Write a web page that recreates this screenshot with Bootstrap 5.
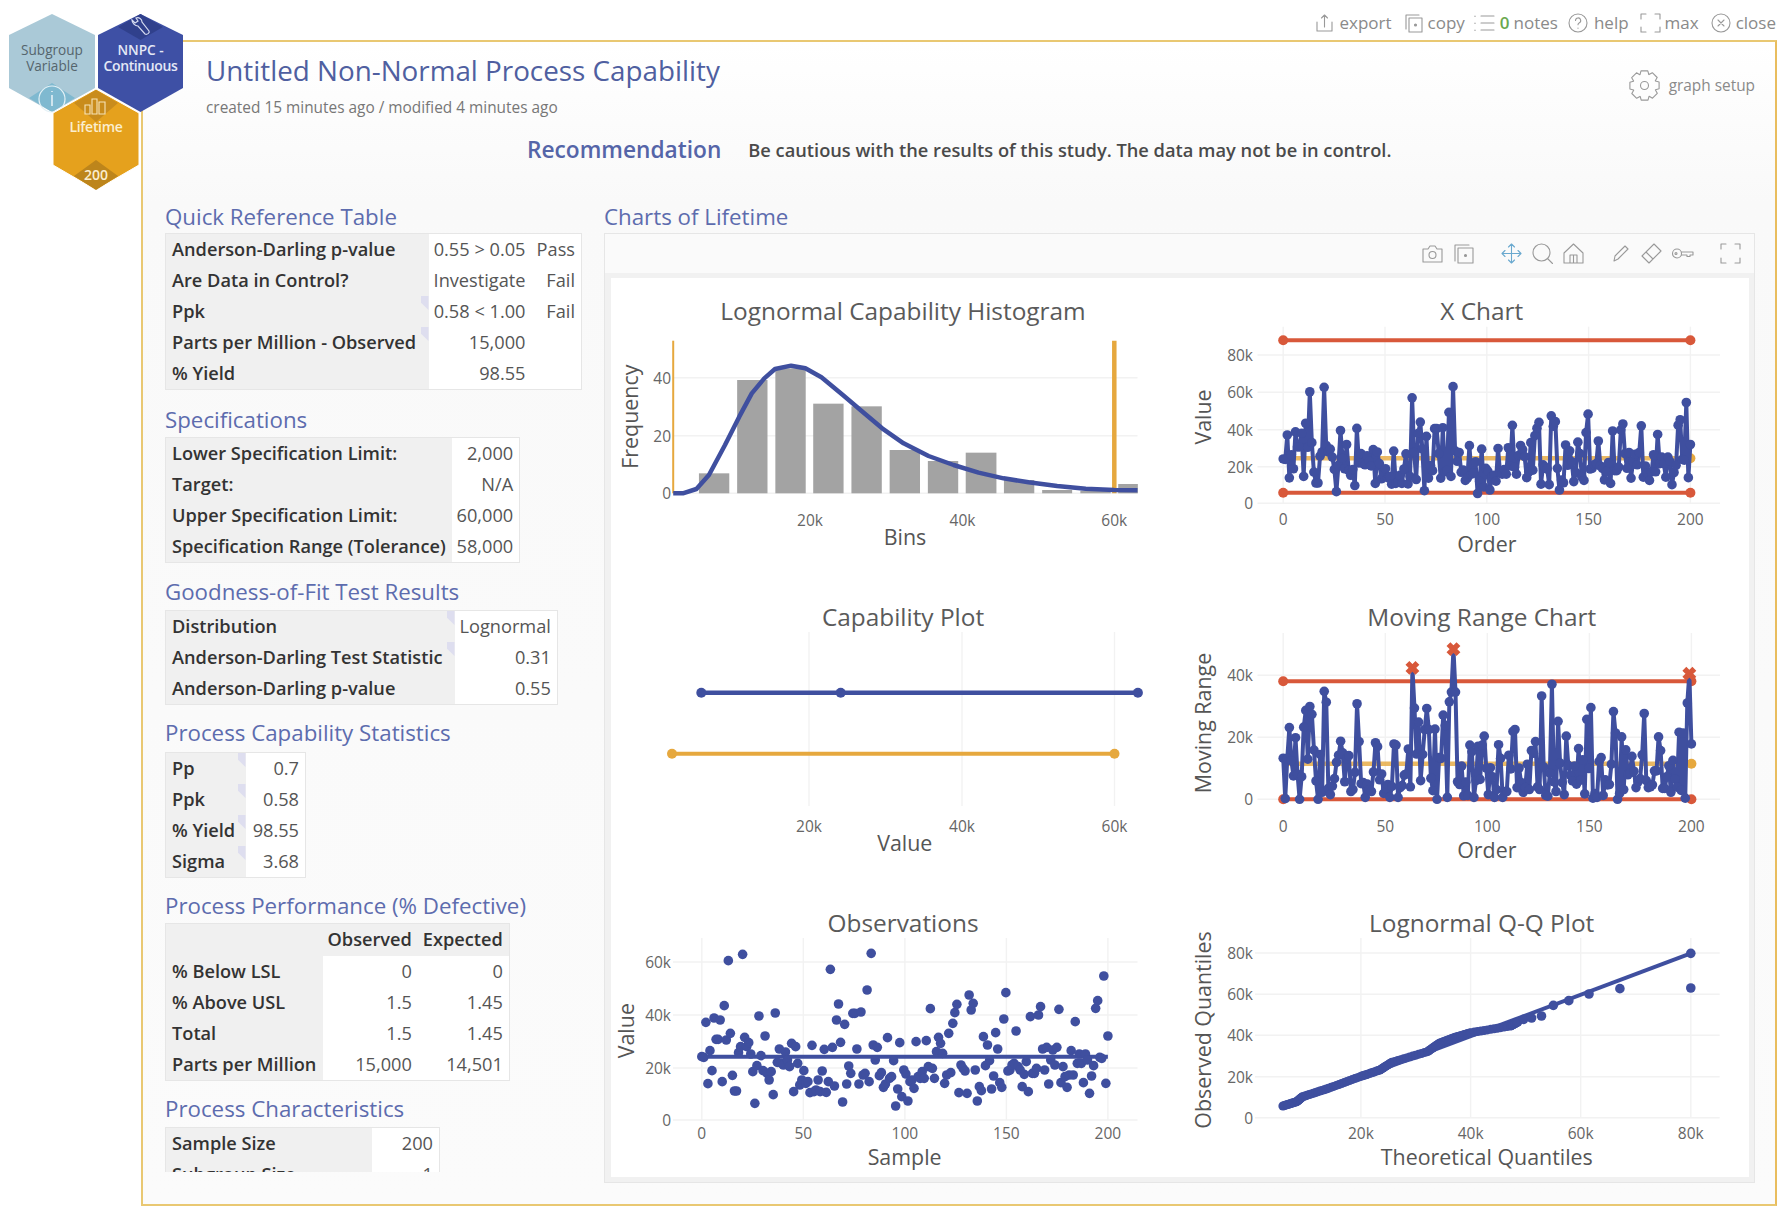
<!DOCTYPE html>
<html lang="en">
<head>
<meta charset="utf-8">
<title>Untitled Non-Normal Process Capability</title>
<link rel="stylesheet" href="https://cdn.jsdelivr.net/npm/bootstrap@5.3.0/dist/css/bootstrap.min.css">
<style>
html,body{height:100%;}
body{font-family:"Open Sans",sans-serif;background:#fff;color:#444;overflow:hidden;position:relative;}
.top-tools{height:40px;padding:5px 15px 0 0;color:#8a8a8a;font-size:17px;line-height:1;}
.top-tools svg,.plot-tools svg,.setup-link svg{fill:none;stroke:#999;stroke-width:1.1;stroke-linecap:round;stroke-linejoin:round;flex:none;}
.tool-item{display:flex;align-items:center;}
.tool-item svg{margin-right:5px;}
.ti-export svg{margin-right:6px;}
.ti-copy{margin-left:12px;}
.ti-notes{margin-left:9px;}
.ti-help{margin-left:10px;}
.ti-help svg{margin-right:6px;}
.ti-max{margin-left:11px;}
.ti-close{margin-left:12px;}
.ti-max svg{margin-right:4px;}
.zero-count{color:#6aa84f;font-weight:600;margin-right:4px;}
.main-frame{margin:0 14px 0 141px;height:1166px;border:2px solid #e9c872;border-right-color:#e9bd5e;background:linear-gradient(#fff 0,#f9f9f9 160px,#fbfbfb 100%);}
.head-row{padding:9px 20px 0 63px;}
.study-title{font-size:27.8px;line-height:38px;font-weight:400;color:#4f5fa0;margin:0;}
.study-sub{font-size:15.400px;line-height:20px;color:#777;margin-top:9px;}
.setup-link{font-size:15.400px;color:#8a8a8a;margin-top:19px;gap:9px;}
.reco-row{padding-left:384px;margin-top:17px;height:30px;line-height:30px;gap:27px;}
.reco-label{font-size:22.7px;font-weight:600;color:#5565a8;}
.reco-text{font-size:18.250px;font-weight:600;color:#4a4a4a;}
.work-row{margin-top:37px;padding-left:22px;}
.left-pane{width:439px;height:970px;overflow:hidden;flex:none;}
.right-pane{width:1151px;flex:none;}
.sec-head{font-size:22.3px;line-height:30px;height:31px;color:#5d6cae;font-weight:400;margin:15px 0 0;white-space:nowrap;}
.sec-head.first-head{margin-top:0;}
.hd-spec{height:32px;}
.sec-head.hd-gof{margin-top:14px;height:33px;}
.sec-head.hd-cap{margin-top:13px;height:34px;}
.sec-head.hd-perf{margin-top:13px;height:32px;}
.sec-head.hd-char{margin-top:13.500px;height:33px;}
.stat-table{width:auto;border:1px solid #e6e6e6;font-size:18.200px;line-height:23px;background:#fff;margin:0;--bs-table-bg:transparent;}
.stat-table td,.stat-table th{padding:4px 6px 4px 5px;height:31px;border:0;white-space:nowrap;color:#444;box-shadow:none;}
.stat-table .lab{font-weight:600;background:#f0f0f0;color:#333;position:relative;text-align:left;padding:4px 4px 4px 6px;}
.stat-table .val{text-align:right;font-weight:400;color:#555;}
.stat-table tr.head-line td{background:#f0f0f0;text-align:right;font-weight:600;color:#333;height:32px;}
.lab.tick::after{content:"";position:absolute;top:0;right:0;width:8px;height:14px;background:#dedeef;clip-path:polygon(0 0,100% 0,100% 100%,0 45%);}
.w-qrt .lab{min-width:263px;}.w-qrt td:nth-child(2){min-width:103px;}.w-qrt td:nth-child(3){min-width:50px;}
.w-spec .lab{min-width:286px;}.w-spec .val{min-width:67px;}
.w-gof .lab{min-width:289px;}.w-gof .val{min-width:102px;}
.w-cap .lab{min-width:80px;}.w-cap .val{min-width:60px;}
.w-perf .lab{min-width:157px;}.w-perf td:nth-child(2){min-width:94px;}.w-perf td:nth-child(3){min-width:90px;}
.w-char .lab{min-width:206px;}.w-char .val{min-width:68px;}
.plot-shell{height:950px;border:1px solid #e6e6e6;background:#f1f1f1;padding:0 5px 5px 6px;display:flex;flex-direction:column;}
.plot-tools{height:39px;flex:none;margin:0 -5px 5px -6px;padding-right:13px;background:#fafafa;color:#999;}
.pt-copy{margin-left:11px;}.pt-move{margin-left:27px;}.pt-zoom,.pt-home{margin-left:10px;}.pt-pen{margin-left:29px;}.pt-erase{margin-left:12px;}.pt-key{margin-left:9px;}.pt-full{margin-left:26px;}
.pt-move path{stroke:#6aa9cf;}
.plot-canvas{flex:1;overflow:hidden;background:#fff;display:grid;grid-template-columns:569px 569px;grid-auto-rows:306px;}
.plot-canvas svg{display:block;width:569px;height:306px;font-family:"Open Sans",sans-serif;}
.c-title{font-size:24.4px;fill:#5a5a5a;text-anchor:middle;dominant-baseline:central;}
.c-axis{font-size:21.4px;fill:#555;text-anchor:middle;dominant-baseline:central;}
.c-tick{font-size:15.5px;fill:#666;dominant-baseline:central;}
.hex-badges{position:absolute;left:0;top:0;width:200px;height:200px;font-family:"Open Sans",sans-serif;}
</style>
</head>
<body>
<div class="top-tools d-flex justify-content-end align-items-center">
  <div class="tool-item ti-export"><svg width="17" height="20" viewBox="0 0 17 20"><path d="M1 9v9h15V9M8.500 14V2M5.500 5l3-3 3 3"/></svg>export</div>
  <div class="tool-item ti-copy"><svg width="19" height="20" viewBox="0 0 19 20"><path d="M2 16V2h13M5 5h13v14H5z"/><circle cx="11.500" cy="12" r="1" fill="#999"/></svg>copy</div>
  <div class="tool-item ti-notes"><svg width="21" height="18" viewBox="0 0 21 18"><path d="M1 2v.5M1 9v.5M1 16v.5M7 2h13M7 9h13M7 16h13"/></svg><span class="zero-count">0</span>notes</div>
  <div class="tool-item ti-help"><svg width="20" height="20" viewBox="0 0 20 20"><circle cx="10" cy="10" r="9"/><path d="M7.500 7.500a2.600 2.600 0 1 1 3.600 2.400c-.8.4-1.100.9-1.100 1.900M10 15v.3"/></svg>help</div>
  <div class="tool-item ti-max"><svg width="21" height="20" viewBox="0 0 21 20"><path d="M1 6V1h5M15 1h5v5M20 14v5h-5M6 19H1v-5"/></svg>max</div>
  <div class="tool-item ti-close"><svg width="20" height="20" viewBox="0 0 20 20"><circle cx="10" cy="10" r="9"/><path d="M7 7l6 6M13 7l-6 6"/></svg>close</div>
</div>

<svg class="hex-badges" viewBox="0 0 200 200">
  <polygon points="52,14 95,35 95,88 52,112 9,88 9,35" fill="#aac9d7"/>
  <polygon points="52,83 75,98 52,112 29,98" fill="#7fb9d0"/>
  <circle cx="52" cy="99" r="13" fill="none" stroke="#e4f1f6" stroke-width="1.2"/>
  <path d="M52 91v1M52 95v11" stroke="#e4f1f6" stroke-width="1.6" fill="none"/>
  <text x="52" y="49" font-size="13.600" fill="#55656d" text-anchor="middle" dominant-baseline="central">Subgroup</text>
  <text x="52" y="65.500" font-size="13.600" fill="#55656d" text-anchor="middle" dominant-baseline="central">Variable</text>
  <polygon points="140.5,14 183,35 183,88 140.5,112 98,88 98,35" fill="#3e50a5"/>
  <polygon points="140.5,14 163,27 140.5,40 118,27" fill="#30408c"/>
  <path d="M132 20l3 3 3-2-2-3c3-1 6 1 6 4l7 9c1 2-2 4-4 3l-7-8c-3 0-6-3-6-6z" fill="none" stroke="#d5dbf0" stroke-width="1.2"/>
  <text x="140.5" y="49" font-size="13.600" font-weight="600" fill="#e4e8f6" text-anchor="middle" dominant-baseline="central">NNPC -</text>
  <text x="140.5" y="65.500" font-size="14" font-weight="600" letter-spacing="-.4" fill="#e4e8f6" text-anchor="middle" dominant-baseline="central">Continuous</text>
  <polygon points="96,89 139,113 139,165 96,190 53,165 53,113" fill="#e5a11d" stroke="#fff" stroke-width="1"/>
  <polygon points="96,90 118,103 96,122 74,103" fill="#c98c1c"/>
  <polygon points="96,160 118,176 96,190 74,176" fill="#bd851b"/>
  <path d="M85 114v-9h5v9zM92 114V99h5v15zM99 114v-12h6v12z" fill="none" stroke="#f6e3b8" stroke-width="1.1"/>
  <text x="96" y="126.500" font-size="14" font-weight="600" letter-spacing="-.3" fill="#fbeecf" text-anchor="middle" dominant-baseline="central">Lifetime</text>
  <text x="96" y="174.500" font-size="14" font-weight="600" fill="#fbeecf" text-anchor="middle" dominant-baseline="central">200</text>
</svg>

<main class="main-frame">
  <div class="head-row d-flex justify-content-between">
    <div>
      <h1 class="study-title">Untitled Non-Normal Process Capability</h1>
      <div class="study-sub">created 15 minutes ago / modified 4 minutes ago</div>
    </div>
    <div class="setup-link d-flex align-items-center align-self-start">
      <svg width="31" height="31" viewBox="0 0 31 31"><path id="gearPath"/><circle cx="15.500" cy="15.500" r="4"/></svg>
      <span>graph setup</span>
    </div>
  </div>
  <div class="reco-row d-flex align-items-center">
    <span class="reco-label">Recommendation</span>
    <span class="reco-text">Be cautious with the results of this study. The data may not be in control.</span>
  </div>
  <div class="work-row d-flex">
    <section class="left-pane">
      <h2 class="sec-head first-head">Quick Reference Table</h2>
      <table class="table stat-table w-qrt"><tbody>
        <tr><td class="lab">Anderson-Darling p-value</td><td class="val">0.55 &gt; 0.05</td><td class="val">Pass</td></tr>
        <tr><td class="lab">Are Data in Control?</td><td class="val">Investigate</td><td class="val">Fail</td></tr>
        <tr><td class="lab tick">Ppk</td><td class="val">0.58 &lt; 1.00</td><td class="val">Fail</td></tr>
        <tr><td class="lab tick">Parts per Million - Observed</td><td class="val">15,000</td><td class="val"></td></tr>
        <tr><td class="lab">% Yield</td><td class="val">98.55</td><td class="val"></td></tr>
      </tbody></table>
      <h2 class="sec-head hd-spec">Specifications</h2>
      <table class="table stat-table w-spec"><tbody>
        <tr><td class="lab">Lower Specification Limit:</td><td class="val">2,000</td></tr>
        <tr><td class="lab">Target:</td><td class="val">N/A</td></tr>
        <tr><td class="lab">Upper Specification Limit:</td><td class="val">60,000</td></tr>
        <tr><td class="lab">Specification Range (Tolerance)</td><td class="val">58,000</td></tr>
      </tbody></table>
      <h2 class="sec-head hd-gof">Goodness-of-Fit Test Results</h2>
      <table class="table stat-table w-gof"><tbody>
        <tr><td class="lab tick">Distribution</td><td class="val">Lognormal</td></tr>
        <tr><td class="lab tick">Anderson-Darling Test Statistic</td><td class="val">0.31</td></tr>
        <tr><td class="lab">Anderson-Darling p-value</td><td class="val">0.55</td></tr>
      </tbody></table>
      <h2 class="sec-head hd-cap">Process Capability Statistics</h2>
      <table class="table stat-table w-cap"><tbody>
        <tr><td class="lab tick">Pp</td><td class="val">0.7</td></tr>
        <tr><td class="lab tick">Ppk</td><td class="val">0.58</td></tr>
        <tr><td class="lab tick">% Yield</td><td class="val">98.55</td></tr>
        <tr><td class="lab tick">Sigma</td><td class="val">3.68</td></tr>
      </tbody></table>
      <h2 class="sec-head hd-perf">Process Performance (% Defective)</h2>
      <table class="table stat-table w-perf"><tbody>
        <tr class="head-line"><td></td><td>Observed</td><td>Expected</td></tr>
        <tr><td class="lab">% Below LSL</td><td class="val">0</td><td class="val">0</td></tr>
        <tr><td class="lab">% Above USL</td><td class="val">1.5</td><td class="val">1.45</td></tr>
        <tr><td class="lab">Total</td><td class="val">1.5</td><td class="val">1.45</td></tr>
        <tr><td class="lab">Parts per Million</td><td class="val">15,000</td><td class="val">14,501</td></tr>
      </tbody></table>
      <h2 class="sec-head hd-char">Process Characteristics</h2>
      <table class="table stat-table w-char"><tbody>
        <tr><td class="lab">Sample Size</td><td class="val">200</td></tr>
        <tr><td class="lab">Subgroup Size</td><td class="val">1</td></tr>
      </tbody></table>
    </section>
    <section class="right-pane">
      <h2 class="sec-head first-head">Charts of Lifetime</h2>
      <div class="plot-shell">
        <div class="plot-tools d-flex align-items-center justify-content-end">
          <svg width="21" height="18" viewBox="0 0 21 18"><path d="M1 4h5l2-3h5l2 3h5v13H1z"/><circle cx="10.500" cy="10" r="3.500"/></svg>
          <svg class="pt-copy" width="20" height="20" viewBox="0 0 20 20"><path d="M1 17V1h14M4 4h15v15H4z"/><circle cx="11.500" cy="11.500" r="1" fill="#999"/></svg>
          <svg class="pt-move" width="21" height="21" viewBox="0 0 21 21"><path d="M10.500 1v19M1 10.500h19M7.500 4l3-3 3 3M7.500 17l3 3 3-3M4 7.500l-3 3 3 3M17 7.500l3 3-3 3"/></svg>
          <svg class="pt-zoom" width="21" height="21" viewBox="0 0 21 21"><circle cx="9.500" cy="9.500" r="8.500"/><path d="M15.500 15.500l5 5"/></svg>
          <svg class="pt-home" width="21" height="21" viewBox="0 0 21 21"><path d="M1 10L10.500 1 20 10v10H1zM7 20v-8h7v8M10.500 12v8"/></svg>
          <svg class="pt-pen" width="16" height="17" viewBox="0 0 16 17"><path d="M1 16l1-5L12 1l3 3L5 14z"/></svg>
          <svg class="pt-erase" width="21" height="21" viewBox="0 0 21 21"><path d="M1 13L13 1l7 7L8 20zM5 9l7 7"/></svg>
          <svg class="pt-key" width="23" height="11" viewBox="0 0 23 11"><circle cx="6" cy="5.500" r="4.500"/><circle cx="5" cy="5.500" r="1"/><path d="M10.500 4H22v3h-3v1.500h-3V7h-5.500"/></svg>
          <svg class="pt-full" width="21" height="21" viewBox="0 0 21 21"><path d="M1 6V1h5M15 1h5v5M20 15v5h-5M6 20H1v-5"/></svg>
        </div>
        <div class="plot-canvas">
          <svg id="cHist" viewBox="611 278 569 306">
            <g class="marks"></g>
            <text class="c-title" x="903" y="310.700">Lognormal Capability Histogram</text>
            <text class="c-tick" x="671" y="377.700" text-anchor="end">40</text><text class="c-tick" x="671" y="435.700" text-anchor="end">20</text><text class="c-tick" x="671" y="493.300" text-anchor="end">0</text>
            <text class="c-tick" x="810" y="520" text-anchor="middle">20k</text><text class="c-tick" x="962.500" y="520" text-anchor="middle">40k</text><text class="c-tick" x="1114.300" y="520" text-anchor="middle">60k</text>
            <text class="c-axis" x="905" y="536.300">Bins</text>
            <text class="c-axis" transform="translate(629.400 416.700) rotate(-90)">Frequency</text>
          </svg>
          <svg id="cX" viewBox="1180 278 569 306">
            <g class="marks"></g>
            <text class="c-title" x="1481.800" y="310.700">X Chart</text>
            <text class="c-tick" x="1253" y="355" text-anchor="end">80k</text><text class="c-tick" x="1253" y="392.300" text-anchor="end">60k</text><text class="c-tick" x="1253" y="429.700" text-anchor="end">40k</text><text class="c-tick" x="1253" y="466.700" text-anchor="end">20k</text><text class="c-tick" x="1253" y="503.300" text-anchor="end">0</text>
            <text class="c-tick" x="1283.200" y="519.300" text-anchor="middle">0</text><text class="c-tick" x="1385" y="519.300" text-anchor="middle">50</text><text class="c-tick" x="1486.800" y="519.300" text-anchor="middle">100</text><text class="c-tick" x="1588.600" y="519.300" text-anchor="middle">150</text><text class="c-tick" x="1690.400" y="519.300" text-anchor="middle">200</text>
            <text class="c-axis" x="1486.800" y="543.300">Order</text>
            <text class="c-axis" transform="translate(1202 417) rotate(-90)">Value</text>
          </svg>
          <svg id="cCap" viewBox="611 584 569 306">
            <g class="marks"></g>
            <text class="c-title" x="903" y="616.300">Capability Plot</text>
            <text class="c-tick" x="809" y="826" text-anchor="middle">20k</text><text class="c-tick" x="962" y="826" text-anchor="middle">40k</text><text class="c-tick" x="1114.500" y="826" text-anchor="middle">60k</text>
            <text class="c-axis" x="904.800" y="842">Value</text>
          </svg>
          <svg id="cMR" viewBox="1180 584 569 306">
            <g class="marks"></g>
            <text class="c-title" x="1481.800" y="616.300">Moving Range Chart</text>
            <text class="c-tick" x="1253" y="675.300" text-anchor="end">40k</text><text class="c-tick" x="1253" y="737.300" text-anchor="end">20k</text><text class="c-tick" x="1253" y="799.300" text-anchor="end">0</text>
            <text class="c-tick" x="1283.200" y="826" text-anchor="middle">0</text><text class="c-tick" x="1385.300" y="826" text-anchor="middle">50</text><text class="c-tick" x="1487.300" y="826" text-anchor="middle">100</text><text class="c-tick" x="1589.400" y="826" text-anchor="middle">150</text><text class="c-tick" x="1691.400" y="826" text-anchor="middle">200</text>
            <text class="c-axis" x="1486.800" y="849">Order</text>
            <text class="c-axis" transform="translate(1202 723) rotate(-90)">Moving Range</text>
          </svg>
          <svg id="cObs" viewBox="611 890 569 306">
            <g class="marks"></g>
            <text class="c-title" x="903" y="922">Observations</text>
            <text class="c-tick" x="671" y="962" text-anchor="end">60k</text><text class="c-tick" x="671" y="1015" text-anchor="end">40k</text><text class="c-tick" x="671" y="1068" text-anchor="end">20k</text><text class="c-tick" x="671" y="1120" text-anchor="end">0</text>
            <text class="c-tick" x="701.800" y="1133" text-anchor="middle">0</text><text class="c-tick" x="803.300" y="1133" text-anchor="middle">50</text><text class="c-tick" x="904.900" y="1133" text-anchor="middle">100</text><text class="c-tick" x="1006.400" y="1133" text-anchor="middle">150</text><text class="c-tick" x="1107.900" y="1133" text-anchor="middle">200</text>
            <text class="c-axis" x="904.600" y="1156.500">Sample</text>
            <text class="c-axis" transform="translate(625.700 1030.700) rotate(-90)">Value</text>
          </svg>
          <svg id="cQQ" viewBox="1180 890 569 306">
            <g class="marks"></g>
            <text class="c-title" x="1481.700" y="922">Lognormal Q-Q Plot</text>
            <text class="c-tick" x="1253" y="953" text-anchor="end">80k</text><text class="c-tick" x="1253" y="994.300" text-anchor="end">60k</text><text class="c-tick" x="1253" y="1035.300" text-anchor="end">40k</text><text class="c-tick" x="1253" y="1076.700" text-anchor="end">20k</text><text class="c-tick" x="1253" y="1117.700" text-anchor="end">0</text>
            <text class="c-tick" x="1360.900" y="1133" text-anchor="middle">20k</text><text class="c-tick" x="1470.600" y="1133" text-anchor="middle">40k</text><text class="c-tick" x="1580.700" y="1133" text-anchor="middle">60k</text><text class="c-tick" x="1690.800" y="1133" text-anchor="middle">80k</text>
            <text class="c-axis" x="1486.800" y="1156.500">Theoretical Quantiles</text>
            <text class="c-axis" transform="translate(1202.700 1030) rotate(-90)">Observed Quantiles</text>
          </svg>
        </div>
      </div>
    </section>
  </div>
</main>

<script src="https://cdn.jsdelivr.net/npm/bootstrap@5.3.0/dist/js/bootstrap.bundle.min.js"></script>
<script>
var BLUE='#3f4f9f',RED='#d8583a',ORG='#e6a83e',GRID='#f2f2f2',GREY='#a3a3a3';
var NS='http://www.w3.org/2000/svg';
function el(host,tag,attrs){var n=document.createElementNS(NS,tag);for(var k in attrs)n.setAttribute(k,attrs[k]);host.appendChild(n);return n;}
function line(h,x1,y1,x2,y2,c,w,o){return el(h,'line',{x1:x1,y1:y1,x2:x2,y2:y2,stroke:c,'stroke-width':w,opacity:o||1});}
function dot(h,x,y,r,c){return el(h,'circle',{cx:x,cy:y,r:r,fill:c});}
function poly(h,p,c,w){return el(h,'polyline',{points:p.map(function(a){return a[0]+','+a[1];}).join(' '),fill:'none',stroke:c,'stroke-width':w,'stroke-linejoin':'round'});}
function grid(h,xs,ys,l,r,t,b){xs.forEach(function(x){line(h,x,t,x,b,GRID,1.4);});ys.forEach(function(y){line(h,l,y,r,y,GRID,1.4);});}
function marks(id){return document.querySelector('#'+id+' .marks');}
/* gear outline: 8 teeth around the settings icon */
(function(){var d='',cx=15.5,cy=15.5,rO=15,rI=11.8,N=8;
 for(var i=0;i<N;i++){var a=i*2*Math.PI/N,w=2*Math.PI/N;
  [[rI,-.5],[rO,-.3],[rO,.3-.02],[rI,.5-.02]].forEach(function(s,j){var t=a+s[1]*w;d+=((i===0&&j===0)?'M':'L')+(cx+s[0]*Math.sin(t)).toFixed(1)+' '+(cy-s[0]*Math.cos(t)).toFixed(1);});}
 document.getElementById('gearPath').setAttribute('d',d+'Z');})();
var zy=[470,472,367,551,452,512,354,418,418,360,545,317,420,182,400,526,573,573,458,440,163,412,440,428,462,515,610,497,348,467,512,408,520,540,515,584,339,487,447,490,495,456,480,500,430,575,440,490,555,540,512,550,545,578,436,575,570,540,575,513,448,577,545,208,442,558,360,312,427,606,373,552,498,520,340,340,447,552,336,525,520,270,545,160,435,480,442,527,518,562,552,413,535,530,482,618,567,428,590,510,522,603,545,540,565,425,530,535,515,535,422,500,326,505,535,455,412,430,460,550,525,400,518,370,338,313,578,495,505,513,580,285,330,310,510,603,560,572,410,497,435,482,567,528,398,447,548,562,357,278,513,510,495,490,393,500,510,560,523,485,575,350,520,520,505,345,320,447,510,442,552,480,450,495,442,328,548,500,530,562,525,452,525,365,490,462,490,548,462,480,580,528,497,325,302,472,475,228,550,408];
var vals=zy.map(function(z){return (660-z)/7.95;});
var n=vals.length;
/* Histogram */
(function(){var h=marks('cHist');
 grid(h,[],[377.7,435.7,493.3],673,1137.5,0,0);
 [[277,362,580],[384,469,300],[491,576,265],[597,682,371],[704,789,379],[811,896,510],[918,1003,543],[1024,1110,518],[1131,1216,600],[1238,1322,630],[1345,1430,632],[1451,1506,612]].forEach(function(b){
  var x=600+b[0]/2.8,w=(b[1]-b[0])/2.8,y=280+b[2]/3;el(h,'rect',{x:x,y:y,width:w,height:493.3-y,fill:GREY});});
 line(h,673.2,340.7,673.2,493.3,ORG,2);line(h,1114.3,340.7,1114.3,493.3,ORG,4.5);
 var c=[[205,640],[232,640],[270,627],[305,585],[350,495],[390,410],[425,340],[460,295],[490,267],[535,257],[575,265],[620,292],[680,345],[740,400],[790,445],[850,490],[920,528],[990,555],[1060,578],[1130,595],[1200,607],[1280,618],[1360,626],[1440,630],[1505,631]];
 poly(h,c.map(function(p){return [600+p[0]/2.8,280+p[1]/3];}),BLUE,4.5);
})();
/* X chart */
(function(){var h=marks('cX'),x0=1283.2,dx=(1690.4-x0)/(n-1);
 grid(h,[1283.2,1385,1486.8,1588.6,1690.4],[355,392.3,429.7,466.7,503.3],1257.5,1720,326.7,503.3);
 var Y=function(v){return 503.3-v*1.855;};
 line(h,x0,458.3,1690.4,458.3,ORG,4.5,.8);dot(h,1690.4,458.3,5,ORG);
 [340.3,492.7].forEach(function(y){line(h,x0,y,1690.4,y,RED,4);dot(h,x0,y,5,RED);dot(h,1690.4,y,5,RED);});
 var p=vals.map(function(v,i){return [x0+i*dx,Y(v)];});
 poly(h,p,BLUE,4);p.forEach(function(a){dot(h,a[0],a[1],4.8,BLUE);});
})();
/* Capability */
(function(){var h=marks('cCap');
 grid(h,[809,962,1114.5],[],0,0,632,806);
 line(h,672,753.7,1114.5,753.7,ORG,4);dot(h,672,753.7,5,ORG);dot(h,1114.5,753.7,5,ORG);
 line(h,701.3,692.7,1137.9,692.7,BLUE,4.5);[701.3,840.7,1137.9].forEach(function(x){dot(h,x,692.7,5,BLUE);});
})();
/* Moving range */
(function(){var h=marks('cMR'),x0=1283.2,x1=1691.4,dx=(x1-x0)/(n-1);
 grid(h,[x0,1385.3,1487.3,1589.4,x1],[675.3,737.3,799.3],1257.5,1720,633,799.3);
 var Y=function(v){return 799.3-v*3.1;};
 line(h,x0,763.7,x1,763.7,ORG,4.5,.8);dot(h,x1,763.7,5,ORG);
 [681.3,799.3].forEach(function(y){line(h,x0,y,x1,y,RED,4);dot(h,x0,y,5,RED);dot(h,x1,y,5,RED);});
 var mr=[Math.abs(vals[1]-vals[0])+13];for(var i=1;i<n;i++)mr.push(Math.abs(vals[i]-vals[i-1]));
 var p=mr.map(function(v,i){return [x0+i*dx,Y(v)];});
 poly(h,p,BLUE,4);
 p.forEach(function(a,i){
  if(mr[i]>38){var s=5;el(h,'path',{d:'M'+(a[0]-s)+' '+(a[1]-s)+'L'+(a[0]+s)+' '+(a[1]+s)+'M'+(a[0]+s)+' '+(a[1]-s)+'L'+(a[0]-s)+' '+(a[1]+s),stroke:RED,'stroke-width':5.5,fill:'none'});}
  else dot(h,a[0],a[1],4.8,BLUE);});
})();
/* Observations */
(function(){var h=marks('cObs'),x0=701.8,dx=(1107.9-x0)/(n-1);
 grid(h,[701.8,803.3,904.9,1006.4,1107.9],[962,1015,1068,1120],673,1137.5,938,1120);
 line(h,x0,1056.7,1107.9,1056.7,BLUE,4);
 zy.forEach(function(z,i){dot(h,x0+i*dx,900+z/3,4.8,BLUE);});
})();
/* Q-Q */
(function(){var h=marks('cQQ');
 grid(h,[1360.9,1470.6,1580.7,1690.8],[953,994.3,1035.3,1076.7,1117.7],1255,1719.7,938,1117.7);
 var X=function(z){return 1170+z/2.525;},Y=function(z){return 900+z/3;};
 line(h,X(285),Y(620),X(1315),Y(160),BLUE,4);
 var path=[[285,618],[320,605],[335,590],[400,565],[480,530],[530,510],[560,487],[650,455],[680,430],[720,412],[760,398],[860,378],[880,365]];
 for(var i=0;i<path.length-1;i++){for(var t=0;t<12;t++){var f=t/12;dot(h,X(path[i][0]+(path[i+1][0]-path[i][0])*f),Y(path[i][1]+(path[i+1][1]-path[i][1])*f),4.5,BLUE);}}
 [[893,358],[913,354],[938,348],[968,316],[1007,302],[1058,282],[1136,266],[1315,264],[1315,160]].forEach(function(p){dot(h,X(p[0]),Y(p[1]),4.8,BLUE);});
})();
</script>
</body>
</html>
